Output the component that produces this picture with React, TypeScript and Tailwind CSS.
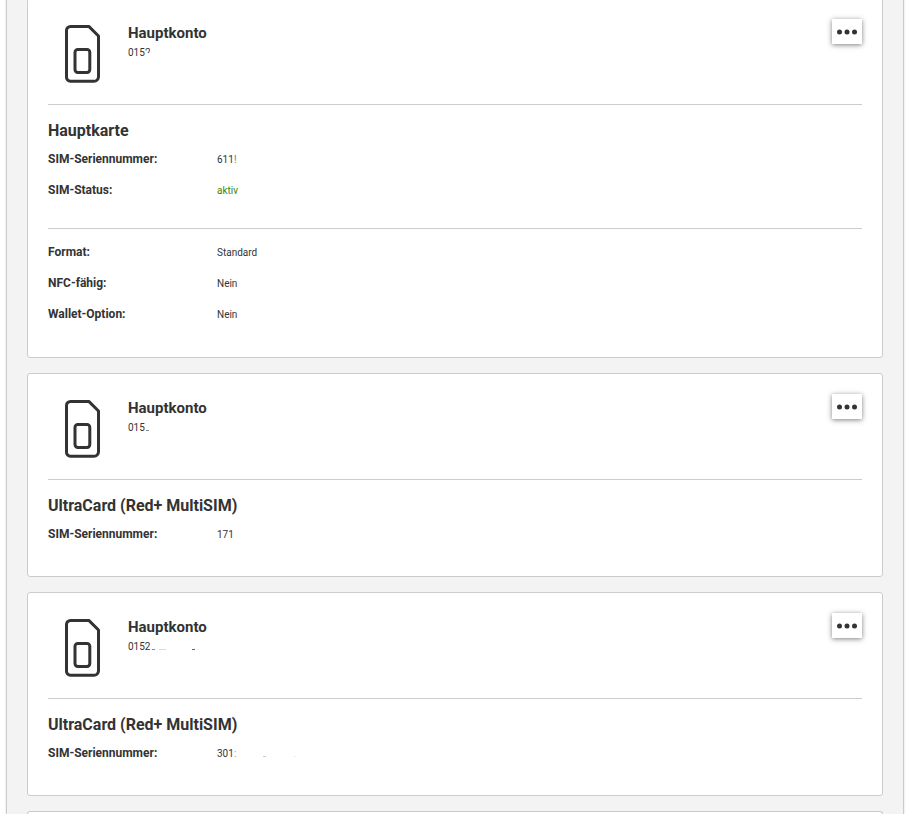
import type { ReactNode } from "react";

type Sim = {
  id: string;
  phone: ReactNode;
  title: string;
  serial: ReactNode;
  status?: string;
  details?: { label: string; value: string }[];
};

// leftover strokes of the masked digits
const Dash = ({ className }: { className: string }) => (
  <span className={`inline-block h-px ${className}`} aria-hidden="true" />
);

const sims: Sim[] = [
  {
    id: "hauptkarte",
    phone: (
      <>
        015<span className="[clip-path:inset(0_0_45%_0)]">2</span>
      </>
    ),
    title: "Hauptkarte",
    serial: (
      <>
        611<span className="text-[#777]">!</span>
      </>
    ),
    status: "aktiv",
    details: [
      { label: "Format:", value: "Standard" },
      { label: "NFC-fähig:", value: "Nein" },
      { label: "Wallet-Option:", value: "Nein" },
    ],
  },
  {
    id: "ultracard-1",
    phone: (
      <>
        015
        <Dash className="ml-px w-[3px] bg-[#888]" />
      </>
    ),
    title: "UltraCard (Red+ MultiSIM)",
    serial: "171",
  },
  {
    id: "ultracard-2",
    phone: (
      <>
        0152
        <Dash className="ml-0.5 w-[3px] bg-[#888]" />
        <Dash className="ml-1 w-[7px] bg-[#ddd]" />
        <Dash className="ml-[26px] w-[3px] bg-[#666]" />
      </>
    ),
    title: "UltraCard (Red+ MultiSIM)",
    serial: (
      <>
        301<span className="text-[#999]">:</span>
        <Dash className="ml-[27px] w-[3px] bg-[#ccc]" />
        <Dash className="ml-7 w-px bg-[#ddd]" />
      </>
    ),
  },
];

const SimIcon = () => (
  <svg
    className="h-[60px] w-[37px]"
    viewBox="0 0 37 60"
    fill="none"
    stroke="#333"
    strokeWidth="3"
    strokeLinejoin="round"
    aria-hidden="true"
  >
    <path d="M6.5 2.400H24.800L34.500 12V52.800a4.500 4.500 0 0 1-4.500 4.500H6.500A4 4 0 0 1 2.500 53V6.400a4 4 0 0 1 4-4z" />
    <rect x="11" y="25.400" width="14.800" height="23" rx="2.800" />
  </svg>
);

const Row = ({ label, children }: { label: string; children: ReactNode }) => (
  <div className="flex h-[31px] items-start">
    <dt className="w-[169px] shrink-0 text-[12px] leading-4 font-bold">{label}</dt>
    <dd className="text-[10px] leading-[18px]">{children}</dd>
  </div>
);

const CardHeader = ({ phone }: { phone: ReactNode }) => (
  <header className="flex h-[106px] items-start border-b border-[#ccc] pt-[25px]">
    <div className="w-20 shrink-0 pl-4">
      <SimIcon />
    </div>
    <div className="flex-1">
      <h2 className="text-[15px] leading-[18px] font-bold">Hauptkonto</h2>
      <p className="text-[10px] leading-[22px]">{phone}</p>
    </div>
    <button
      type="button"
      aria-label="Optionen"
      className="-mt-[5px] flex h-[25px] w-[30px] items-center justify-center bg-white shadow-[0_1px_5px_rgba(0,0,0,0.5)]"
    >
      <svg className="h-[6px] w-5" viewBox="0 0 20 6" fill="#333" aria-hidden="true">
        <circle cx="2.500" cy="3" r="2.500" />
        <circle cx="10" cy="3" r="2.500" />
        <circle cx="17.500" cy="3" r="2.500" />
      </svg>
    </button>
  </header>
);

const SimCard = ({ sim }: { sim: Sim }) => (
  <article className="rounded-[3px] border border-[#ccc] bg-white px-5 pb-[19px]">
    <CardHeader phone={sim.phone} />
    <h3 className="pt-3.5 pb-2 text-[16px] leading-6 font-bold">{sim.title}</h3>
    <dl>
      <Row label="SIM-Seriennummer:">{sim.serial}</Row>
      {sim.status && (
        <Row label="SIM-Status:">
          <span className="text-[#428600]">{sim.status}</span>
        </Row>
      )}
    </dl>
    {sim.details && (
      <dl className="mt-[15px] border-t border-[#ccc] pt-[15px] pb-px">
        {sim.details.map((item) => (
          <Row key={item.label} label={item.label}>
            {item.value}
          </Row>
        ))}
      </dl>
    )}
  </article>
);

const App = () => {
  return (
    <div className="h-screen overflow-hidden bg-white pr-[7px] pl-1.5 font-[Roboto,sans-serif] text-[#333]">
      <main className="-mt-0.5 flex flex-col gap-[15px] border-x border-[#ccc] bg-[#f3f3f3] px-5 shadow-[0_0_2px_rgba(0,0,0,0.15)]">
        {sims.map((sim) => (
          <SimCard key={sim.id} sim={sim} />
        ))}
        {/* next card, only its top edge is in view */}
        <div className="h-10 rounded-t-[3px] border border-b-0 border-[#ccc] bg-white" />
      </main>
    </div>
  );
};

export default App;
